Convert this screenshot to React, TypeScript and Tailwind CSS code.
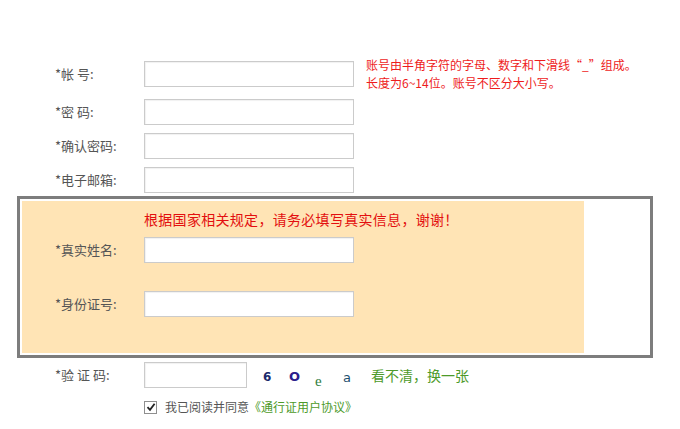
import React from 'react'

const font = 'font-["Microsoft_YaHei","Noto_Sans_CJK_SC",sans-serif]'

function Field({ w = 'w-[210px]' }: { w?: string }) {
  return (
    <input
      type="text"
      className={`${w} h-[26px] bg-white border border-[#cbcbcb] shadow-[inset_1px_1px_1px_rgba(0,0,0,0.06)] outline-none`}
    />
  )
}

function Label({ text }: { text: string }) {
  return <span className="w-[89px] shrink-0 whitespace-pre text-[13px] text-[#555]">{text}</span>
}

export default function App() {
  return (
    <div className={`w-[680px] h-[429px] bg-white overflow-hidden pt-[61px] ${font}`}>
      <div className="ml-[17px] w-[636px]">
        {/* account */}
        <div className="flex items-center h-[26px] pl-[38px]">
          <Label text="*帐 号:" />
          <Field />
          <div className="ml-[12px] text-[12px] leading-[18px] text-[#ee1c1c] whitespace-nowrap">
            <div>账号由半角字符的字母、数字和下滑线“_”组成。</div>
            <div>长度为6~14位。账号不区分大小写。</div>
          </div>
        </div>
        <div className="flex items-center h-[26px] pl-[38px] mt-[12px]">
          <Label text="*密 码:" />
          <Field />
        </div>
        <div className="flex items-center h-[26px] pl-[38px] mt-[8px]">
          <Label text="*确认密码:" />
          <Field />
        </div>
        <div className="flex items-center h-[26px] pl-[38px] mt-[8px]">
          <Label text="*电子邮箱:" />
          <Field />
        </div>

        {/* real-name box */}
        <div className="mt-[3px] w-[636px] border-[3px] border-[#7d7d7d] p-[2px] bg-white">
          <div className="w-[562px] bg-[#ffe4b5] pt-[8px] pb-[36px]">
            <div className="pl-[122px] h-[20px] leading-[20px] text-[14px] text-[#e30f0f] tracking-[0.3px]">
              根据国家相关规定，请务必填写真实信息，谢谢！
            </div>
            <div className="flex items-center h-[26px] pl-[33px] mt-[8px]">
              <Label text="*真实姓名:" />
              <Field />
            </div>
            <div className="flex items-center h-[26px] pl-[33px] mt-[28px]">
              <Label text="*身份证号:" />
              <Field />
            </div>
          </div>
        </div>

        {/* captcha */}
        <div className="flex items-center h-[26px] pl-[38px] mt-[4px]">
          <Label text="*验 证 码:" />
          <Field w="w-[103px]" />
          <div className="flex items-start h-[26px] ml-[16px] w-[106px] font-['DejaVu_Sans',sans-serif]">
            <span className="mt-[6px] w-[26px] text-[12px] font-bold text-[#1b2a6b]">6</span>
            <span className="mt-[5px] w-[26px] text-[13px] font-bold text-[#2c1d8c]">O</span>
            <span className="mt-[8px] w-[28px] text-[15px] text-[#2f7d3c] font-['Liberation_Serif',serif]">e</span>
            <span className="mt-[6px] w-[24px] text-[13px] text-[#1d4f6e]">a</span>
          </div>
          <span className="ml-[2px] text-[14px] text-[#4d9a2a] whitespace-nowrap">看不清，换一张</span>
        </div>

        {/* agreement */}
        <div className="flex items-center h-[14px] pl-[127px] mt-[12px]">
          <span className="w-[13px] h-[13px] border border-[#8f8f8f] bg-white flex items-center justify-center">
            <svg width="10" height="10" viewBox="0 0 10 10">
              <path d="M1.5 5.2 L4 7.8 L8.6 1.8" fill="none" stroke="#222" strokeWidth="1.8" />
            </svg>
          </span>
          <span className="ml-[8px] text-[12px] text-[#555] whitespace-nowrap">
            我已阅读并同意<span className="text-[#4d9a2a]">《通行证用户协议》</span>
          </span>
        </div>
      </div>
    </div>
  )
}
